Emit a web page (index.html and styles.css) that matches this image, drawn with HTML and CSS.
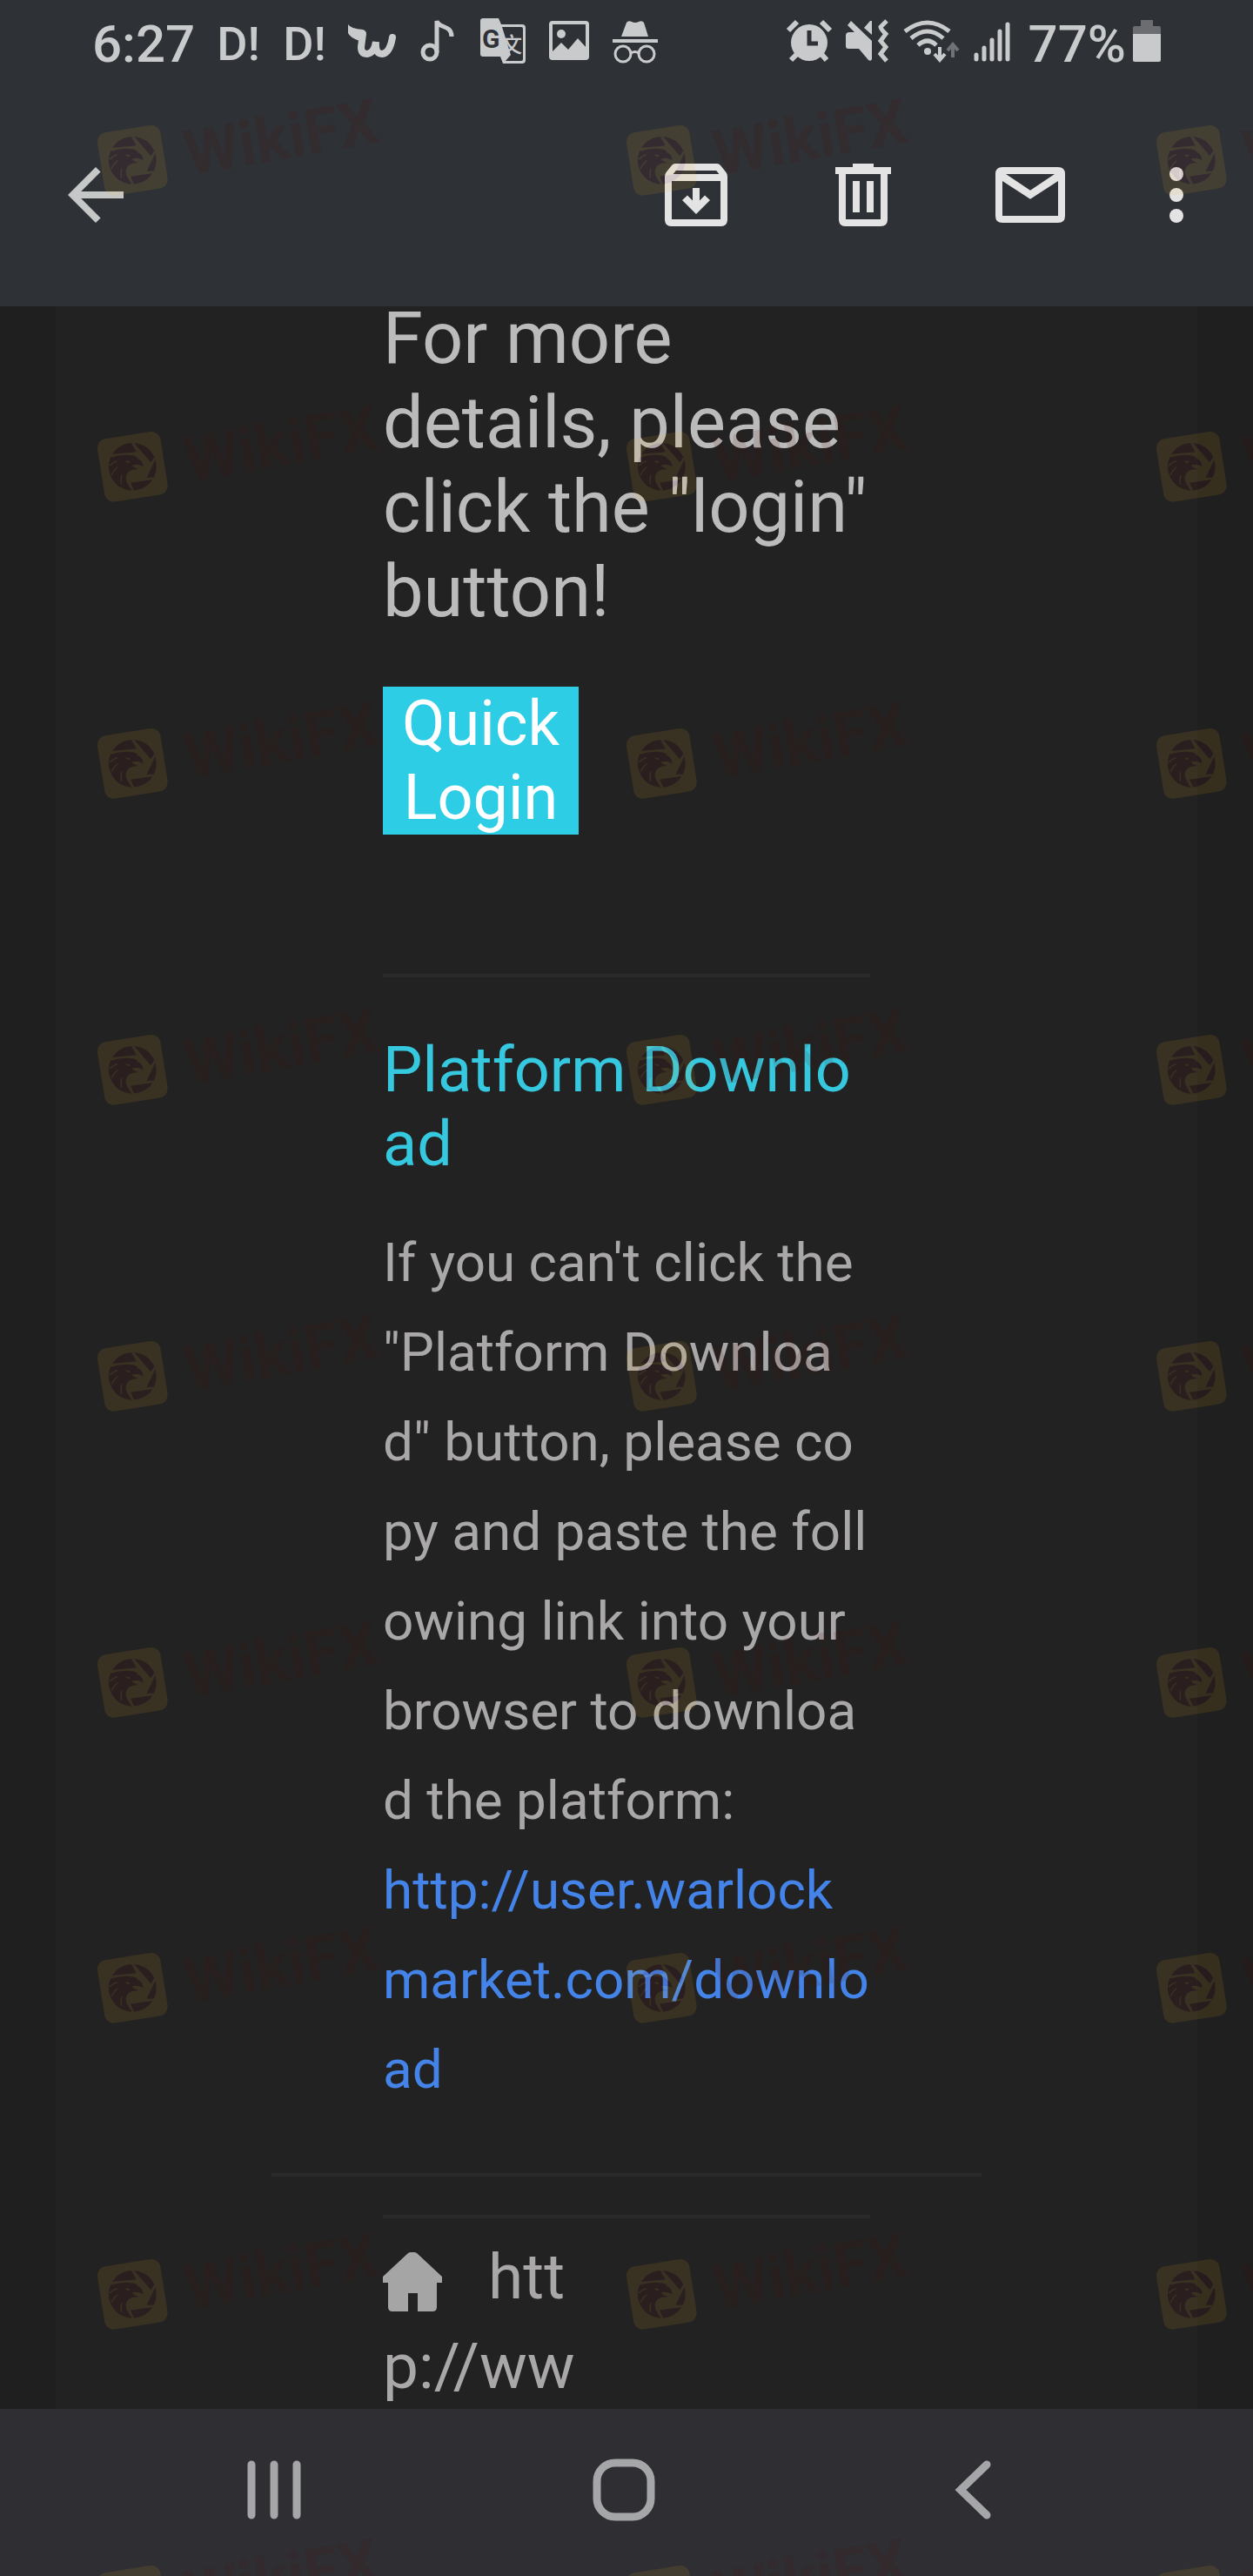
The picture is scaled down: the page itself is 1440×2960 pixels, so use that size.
FILE: index.html
```
<!DOCTYPE html>
<html lang="en">
<head>
  <meta charset="UTF-8" />
  <meta name="viewport" content="width=device-width, initial-scale=1.0"/>
  <title>Mail</title>
  <link rel="stylesheet" href="styles.css">
</head>
<body>

  <header class="top">
    <div class="status-bar">
      <span class="time">6:27</span>
      <div class="notifications">
        <span class="slot">D!</span>
        <span class="slot">D!</span>
        <span class="slot">
          <svg width="52" height="52" viewBox="0 0 52 52">
            <path fill="currentColor" d="M0 7Q3 12 17 13Q21 14 20 18L13 26Q2 22 0 17Z"/>
            <path class="line" stroke-width="8" d="M17 18L15 33Q15 41 22 41Q30 40 32 27Q31 41 39 41Q48 40 51 22"/>
          </svg>
        </span>
        <span class="slot">
          <svg width="52" height="52" viewBox="0 0 52 52">
            <ellipse class="line" stroke-width="5" cx="18" cy="39" rx="8" ry="8"/>
            <path class="line" stroke-width="5" stroke-linecap="butt" d="M26 39V3C28 12 43 7 43 21"/>
          </svg>
        </span>
        <span class="slot">
          <svg width="52" height="52" viewBox="0 0 52 52">
            <path fill="currentColor" fill-rule="evenodd" d="M3 0H21L24 7H48Q52 7 52 11V48Q52 52 48 52H26L23 44H3Q0 44 0 41V3Q0 0 3 0ZM25 10L35 42L29 49H47Q49 49 49 47V12Q49 10 47 10Z"/>
            <text class="glyph-g" x="2" y="34">G</text>
            <text class="glyph-cjk" x="24" y="39">文</text>
          </svg>
        </span>
        <span class="slot">
          <svg width="52" height="52" viewBox="0 0 52 52">
            <rect class="line" stroke-width="4" x="5" y="5" width="42" height="41" rx="2"/>
            <circle fill="currentColor" cx="17" cy="18" r="5"/>
            <path fill="currentColor" d="M6 39L17 28L25 36L36 23L46 34V46H6Z"/>
          </svg>
        </span>
        <span class="slot">
          <svg width="52" height="52" viewBox="0 0 52 52">
            <path fill="currentColor" d="M10 21L16 5Q18 2 22 4Q26 6 30 4Q34 2 36 5L41 21ZM0 24H52V28H0Z"/>
            <circle class="line" stroke-width="3" cx="12" cy="41" r="9"/>
            <circle class="line" stroke-width="3" cx="39" cy="41" r="9"/>
            <path class="line" stroke-width="3" d="M21 40Q26 37 30 40"/>
          </svg>
        </span>
      </div>
      <div class="system">
        <svg width="52" height="52" viewBox="0 0 52 52">
          <circle fill="currentColor" cx="26" cy="28" r="21"/>
          <path class="line" stroke-width="6" stroke-linecap="butt" d="M2 14L12 4M40 4L50 14M13 40L5 48M39 40L46 48"/>
          <path class="cut" stroke-width="5" d="M26 14V29H36"/>
        </svg>
        <svg width="52" height="52" viewBox="0 0 52 52">
          <path fill="currentColor" d="M8 3L32 26V47Q31 50 28 48L17 35H5Q2 35 2 32V20Q2 16 6 16H12L4 8ZM32 3V19L23 11L30 3Z"/>
          <path class="line" stroke-width="5" stroke-linecap="butt" d="M49 3L42 10Q42 12 48 18L42 26L48 33L42 41L49 49"/>
        </svg>
        <svg width="68" height="52" viewBox="0 0 68 52">
          <path class="line" stroke-width="5" stroke-linecap="butt" d="M4 15Q30 -5 55 15M11 23Q30 7 48 23M19 31Q30 21 40 31"/>
          <circle fill="currentColor" cx="30" cy="38" r="4"/>
          <path class="line" stroke-width="4" stroke-linecap="butt" d="M44 33V47M38 41L44 48L50 41"/>
          <path class="line faint" stroke-width="4" stroke-linecap="butt" d="M59 45V31M53 37L59 30L65 37"/>
        </svg>
        <svg width="44" height="52" viewBox="0 0 44 52">
          <path class="line" stroke-width="5" d="M4 42V47M13 34V47M22 25V47M31 15V47M40 7V47"/>
        </svg>
        <span class="percent">77%</span>
        <svg width="32" height="52" viewBox="0 0 32 52">
          <path class="spent" d="M9 9V2H23V9H30Q32 9 32 11V18H0V11Q0 9 2 9Z"/>
          <path fill="currentColor" d="M0 18H32V48Q32 50 30 50H2Q0 50 0 48Z"/>
        </svg>
      </div>
    </div>

    <div class="toolbar">
      <button class="icon-btn back" type="button" aria-label="Back">
        <svg viewBox="0 0 24 24"><path d="M20 11H7.8l5.6-5.6L12 4l-8 8 8 8 1.4-1.4L7.8 13H20z"/></svg>
      </button>
      <div class="actions">
        <button class="icon-btn" type="button" aria-label="Archive">
          <svg viewBox="0 0 24 24"><path fill-rule="evenodd" d="M6 3h12q.6 0 1 .5l1.6 2q.4.5.4 1.2V19q0 2-2 2H5q-2 0-2-2V6.700q0-.7.4-1.200L5 3.500Q5.400 3 6 3zM6.200 5l-.8 1h13.200l-.8-1zM5 8v11h14V8zM11 10h2v3.600l1.500-1.500L16 13.500l-4 4-4-4 1.500-1.400L11 13.600z"/></svg>
        </button>
        <button class="icon-btn" type="button" aria-label="Delete">
          <svg viewBox="0 0 24 24"><path fill-rule="evenodd" d="M9 3h6v1h5v2h-1v13q0 2-2 2H7q-2 0-2-2V6H4V4h5zM7 6v13h10V6zM9 8h2v9H9zM13 8h2v9h-2z"/></svg>
        </button>
        <button class="icon-btn" type="button" aria-label="Mark as unread">
          <svg viewBox="0 0 24 24"><path fill-rule="evenodd" d="M4 4h16q2 0 2 2v12q0 2-2 2H4q-2 0-2-2V6q0-2 2-2zM5 6l7 4.700L19 6zM4 8v10h16V8l-8 5.200z"/></svg>
        </button>
      </div>
      <button class="icon-btn" type="button" aria-label="More options">
        <svg viewBox="0 0 24 24"><circle cx="12" cy="6" r="2"/><circle cx="12" cy="12" r="2"/><circle cx="12" cy="18" r="2"/></svg>
      </button>
    </div>
  </header>

  <main class="mail">
    <article class="card">
      <div class="column">
        <p class="lead">For more details, please click the "login" button!</p>
        <a class="login" href="#login">Quick Login</a>
        <hr>
        <h2>Platform Download</h2>
        <p class="copy">If you can't click the "Platform Download" button, please copy and paste the following link into your browser to download the platform:<br>
          <a href="#download">http://user.warlockmarket.com/download</a></p>
      </div>
      <hr class="wide">
      <div class="column">
        <hr>
        <div class="site">
          <svg width="68" height="68" viewBox="0 0 68 68"><path d="M29 1Q34-2 39 1L68 28V35H62V63Q62 68 57 68H40V47H29V68H11Q6 68 6 63V35H0V28Z"/></svg>
          <span>http://ww</span>
        </div>
      </div>
    </article>
  </main>

  <nav class="nav-bar">
    <button type="button" aria-label="Recent apps">
      <svg width="72" height="72" viewBox="0 0 72 72"><path d="M10 7V65M36 7V65M62 7V65"/></svg>
    </button>
    <button type="button" aria-label="Home">
      <svg width="72" height="72" viewBox="0 0 72 72"><rect x="5" y="5" width="62" height="62" rx="21"/></svg>
    </button>
    <button type="button" aria-label="Back">
      <svg width="72" height="72" viewBox="0 0 72 72"><path d="M51 7L21 36L51 65"/></svg>
    </button>
  </nav>

  <!-- watermark, repeated over the whole screen -->
  <svg class="watermark" aria-hidden="true">
    <defs>
      <g id="mark">
        <g opacity=".1" transform="translate(-12 -26) scale(.3333)">
          <rect fill="#feb81e" x="47" y="89" width="220" height="220" rx="32" transform="rotate(-9 157 199)"/>
          <circle fill="#6e000f" cx="157" cy="199" r="82"/>
          <path fill="#feb81e" d="M78 164L84 156L170 148L150 112L158 112L220 184L236 160L240 165L206 236L232 236L232 242L150 254L164 284L156 284L135 250L110 170Z"/>
          <path fill="#6e000f" d="M93 164C115 158 140 156 155 160C168 162 174 166 175 171C188 176 194 188 193 199C184 191 168 192 158 193C154 196 158 200 178 208C150 206 136 218 134 236C134 252 142 266 153 280C138 280 122 272 114 252L111 268C100 256 92 244 90 232L76 214C74 200 76 184 93 164Z"/>
          <path class="feathers" d="M78 196Q92 182 104 180M84 228Q94 208 106 200M118 260Q116 240 120 228"/>
          <path fill="#feb81e" d="M132 178L148 181Q150 185 142 187Q135 186 132 178Z"/>
        </g>
        <text class="brand" x="105" y="58" transform="rotate(-10 105 58)">WikiFX</text>
      </g>
      <g id="row">
        <use href="#mark" x="112"/>
        <use href="#mark" x="720"/>
        <use href="#mark" x="1329"/>
      </g>
    </defs>
    <use href="#row" y="144"/>
    <use href="#row" y="496"/>
    <use href="#row" y="837"/>
    <use href="#row" y="1189"/>
    <use href="#row" y="1541"/>
    <use href="#row" y="1893"/>
    <use href="#row" y="2244"/>
    <use href="#row" y="2596"/>
    <use href="#row" y="2948"/>
  </svg>

</body>
</html>
```
FILE: styles.css
```
* {
  box-sizing: border-box;
}

body {
  position: relative;
  display: flex;
  flex-direction: column;
  min-height: 100vh;
  margin: 0;
  background: #1f1f1f;
  font-family: Roboto, "Noto Sans CJK SC", sans-serif;
  color: #a9a7a7;
  overflow-x: hidden;
}

button {
  padding: 0;
  border: 0;
  background: none;
  color: inherit;
  cursor: pointer;
}

svg {
  display: block;
  flex: none;
}

/* header */
.top {
  height: 352px;
  background: #2e3136;
}

.status-bar {
  display: flex;
  align-items: center;
  height: 100px;
  padding: 0 106px;
  color: #c9cacc;
  font-size: 60px;
  font-weight: 500;
}

.status-bar svg {
  margin-bottom: 6px;
  overflow: visible;
}

.time {
  width: 130px;
}

.notifications,
.system {
  display: flex;
  align-items: center;
}

.slot {
  display: flex;
  justify-content: center;
  width: 76px;
  font-size: 54px;
}

.system {
  gap: 14px;
  margin-left: auto;
}

.percent {
  margin: 0 -6px 0 6px;
}

.line {
  fill: none;
  stroke: currentColor;
  stroke-linecap: round;
}

.line[stroke-linecap="butt"] {
  stroke-linecap: butt;
}

.faint {
  stroke: #6f7377;
}

.cut {
  fill: none;
  stroke: #2e3136;
}

.spent {
  fill: #6b6d71;
}

.glyph-g {
  fill: #2e3136;
  font-size: 30px;
  font-weight: 700;
}

.glyph-cjk {
  fill: currentColor;
  font-family: "Noto Sans CJK SC", sans-serif;
  font-size: 24px;
}

.toolbar {
  display: flex;
  align-items: center;
  gap: 72px;
  padding: 76px 40px 0 62px;
}

.icon-btn {
  width: 96px;
  height: 96px;
  color: #e3e3e3;
}

.icon-btn svg {
  width: 100%;
  height: 100%;
  fill: currentColor;
}

.back {
  margin-right: auto;
  color: #c6c8c8;
}

.actions {
  display: flex;
  gap: 96px;
}

/* message */
.mail {
  display: flex;
  flex: 1;
  padding: 0 64px;
}

.card {
  display: flow-root;
  flex: 1;
  background: #222;
}

.column {
  max-width: 560px;
  margin: 0 auto;
}

/* the message is scrolled a little under the header */
.card .column:first-child {
  margin-top: -12px;
}

.lead {
  margin: 0 0 61px;
  font-size: 83px;
  line-height: 97px;
  color: #bbb;
}

.login {
  display: block;
  width: 225px;
  padding: 0 20px;
  background: #2ecde6;
  color: #fff;
  font-size: 72px;
  line-height: 85px;
  text-align: center;
  text-decoration: none;
}

hr {
  height: 4px;
  margin: 0;
  border: 0;
  background: #2a2a2a;
}

.login + hr {
  margin: 160px 0 64px;
}

h2 {
  margin: 0 0 42px;
  color: #36c8df;
  font-size: 72px;
  font-weight: 400;
  line-height: 85px;
  word-break: break-all;
}

.copy {
  margin: 0;
  font-size: 62px;
  line-height: 103px;
  word-break: break-all;
}

.copy a {
  color: #4483e8;
  text-decoration: none;
}

.wide {
  max-width: 816px;
  margin: 68px auto 44px;
}

.site {
  width: 225px;
  margin: 16px 0 -12px;
  font-size: 73px;
  line-height: 103px;
  word-break: break-all;
}

.site svg {
  display: inline-block;
  margin-right: 35px;
  vertical-align: -15px;
  fill: #a5a5a5;
}

/* system navigation */
.nav-bar {
  display: grid;
  grid-template-columns: repeat(3, 1fr);
  height: 192px;
  padding: 0 120px 6px 114px;
  background: #2e2e33;
}

.nav-bar button {
  display: flex;
  align-items: center;
  justify-content: center;
}

.nav-bar svg {
  fill: none;
  stroke: #a5a6a8;
  stroke-width: 9;
  stroke-linecap: round;
}

/* watermark */
.watermark {
  position: absolute;
  inset: 0;
  width: 100%;
  height: 100%;
  pointer-events: none;
}

.brand {
  fill: #4e0e00;
  opacity: .12;
  font-size: 72px;
  font-weight: 700;
}

.feathers {
  fill: none;
  stroke: #feb81e;
  stroke-width: 4;
}
```
